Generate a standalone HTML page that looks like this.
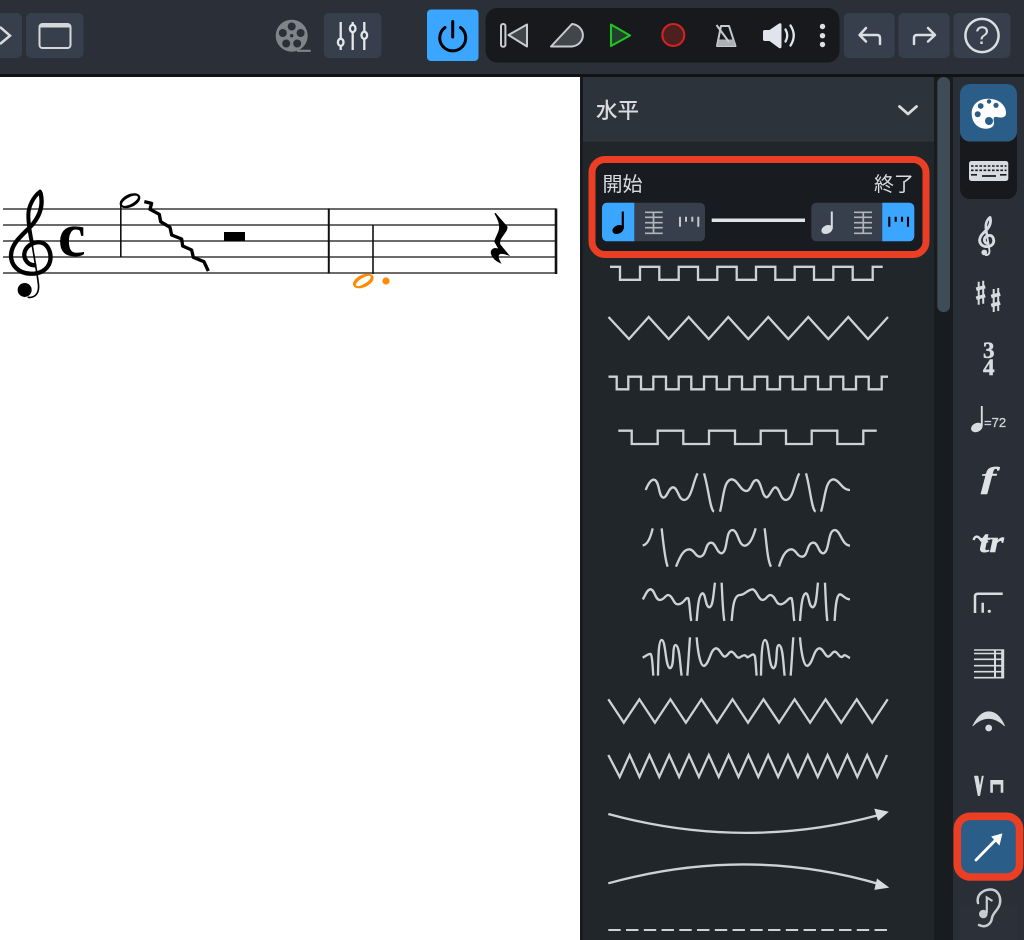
<!DOCTYPE html>
<html lang="ja"><head><meta charset="utf-8"><title>Score</title>
<style>
html,body{margin:0;padding:0;background:#fff;width:1024px;height:940px;overflow:hidden}
svg{display:block}
.cjk{font-family:"Liberation Sans","Noto Sans CJK JP",sans-serif;fill:#d8dce0}
.serif{font-family:"Liberation Serif",serif}
.l{fill:none;stroke:#ced2d5;stroke-width:2.3}
</style></head><body>
<svg width="1024" height="940" viewBox="0 0 1024 940" xmlns="http://www.w3.org/2000/svg">
<defs>
<g id="sharp" stroke="#d8dce0" fill="none">
<path stroke-width="2" d="M-2 -11V12M2.5 -12V11"/>
<path stroke-width="3.6" d="M-4.5 -3.5L4.5 -6M-4.5 5.5L4.5 3"/>
</g>
</defs>

<rect width="1024" height="940" fill="#fff"/>

<!-- score -->
<g fill="none" stroke="#3a3a3a" stroke-width="1.5">
<path d="M3 209H556M3 225H556M3 241H556M3 257H556M3 273H556"/>
</g>
<path d="M328.8 208.5V273.5" stroke="#111" stroke-width="2"/>
<path d="M556 208.5V274" stroke="#111" stroke-width="2.6"/>
<g transform="translate(0 170) scale(.3333)" fill="none" stroke="#000" stroke-linecap="round">
<path stroke-width="13" d="M103 286C80 285 68 262 75 243C82 225 105 213 125 218C148 225 155 255 150 275C143 302 115 313 90 311C55 310 32 285 33 255C35 215 75 190 100 160C120 135 130 105 122 70"/>
<path stroke-width="12" d="M120 65C100 80 85 110 85 135C85 160 90 190 95 215"/>
<path stroke-width="5" d="M95 215C102 260 110 300 115 340C120 375 100 384 85 382"/>
<circle cx="74" cy="360" r="21" fill="#000" stroke="none"/>
</g>
<text class="serif" x="58" y="256" font-size="62" font-weight="700" fill="#000">c</text>
<path d="M120.8 201V257" stroke="#111" stroke-width="1.6"/>
<ellipse cx="130" cy="200.7" rx="11" ry="6.4" transform="rotate(-25 130 200.7)" fill="#000"/>
<ellipse cx="130" cy="200.7" rx="8.8" ry="3.4" transform="rotate(-28 130 200.7)" fill="#fff"/>
<g transform="translate(0 170) scale(.3333)">
<path fill="none" stroke="#000" stroke-width="10" stroke-linejoin="round" d="M433 95L455 100L450 118L478 133L482 155L510 172L515 195L545 207L548 228L575 240L580 262L612 275L625 303"/>
</g>
<rect x="224" y="232" width="21" height="9" fill="#000"/>
<path d="M373 225V274" stroke="#111" stroke-width="1.6"/>
<ellipse cx="363.3" cy="281" rx="11" ry="6.2" transform="rotate(-25 363.3 281)" fill="#ff8c00"/>
<ellipse cx="363.3" cy="281" rx="8.6" ry="3" transform="rotate(-32 363.3 281)" fill="#fff"/>
<circle cx="386" cy="281" r="3.6" fill="#ff8c00"/>
<g transform="translate(300 170) scale(.3333)"><path fill="#000" stroke="#000" stroke-width="4" d="M585 130L620 170C625 185 590 205 600 225L624 254C600 245 585 250 600 277C575 265 565 240 585 236L598 238L585 215C590 190 615 180 585 130Z"/></g>

<!-- toolbar -->
<rect width="1024" height="74" fill="#2a2f38"/>
<rect y="74" width="1024" height="3" fill="#101214"/>
<g fill="#363f4b">
<rect x="-8" y="13" width="30" height="45" rx="5"/>
<rect x="26" y="13" width="57.5" height="45" rx="5"/>
<rect x="323.7" y="13" width="57.8" height="45" rx="5"/>
<rect x="843.7" y="13" width="51" height="45" rx="5"/>
<rect x="898.4" y="13" width="51.3" height="45" rx="5"/>
<rect x="953.5" y="13" width="57" height="45" rx="5"/>
</g>
<path d="M0 27L10 35.7L0 44" fill="none" stroke="#d8dce0" stroke-width="2.5"/>
<rect x="39.5" y="24" width="31" height="24" rx="3" fill="none" stroke="#d5d8da" stroke-width="2"/>
<path d="M39.5 27a3 3 0 0 1 3-3h25a3 3 0 0 1 3 3v.5h-31z" fill="#d5d8da"/>
<circle cx="291.7" cy="35.7" r="16" fill="#7f8488"/>
<g fill="#2a2f38"><circle cx="291.7" cy="26.5" r="4"/><circle cx="282.8" cy="33" r="4"/><circle cx="300.6" cy="33" r="4"/><circle cx="286.2" cy="43.5" r="4"/><circle cx="297.2" cy="43.5" r="4"/><circle cx="291.7" cy="35.7" r="1.7"/></g>
<path d="M297 50.8H310.7" stroke="#7f8488" stroke-width="2.2"/>
<g stroke="#e4e7ea" stroke-width="2.3" fill="#363f4b">
<path d="M340.7 22V50M352.7 22V50M364.3 22V50" fill="none"/>
<ellipse cx="340.7" cy="42.3" rx="2.8" ry="3.6"/><ellipse cx="352.7" cy="28.5" rx="2.8" ry="3.6"/><ellipse cx="364.3" cy="35.3" rx="2.8" ry="3.6"/>
</g>
<rect x="427" y="9.5" width="51.5" height="51.5" rx="4" fill="#3aa6ff"/>
<path d="M445 27.5A13 13 0 1 0 460.5 27.5M452.7 21.5V37" fill="none" stroke="#000" stroke-width="3" stroke-linecap="round"/>
<rect x="485.5" y="8" width="354" height="54.5" rx="12" fill="#17191d"/>
<g stroke="#c8ccd0" stroke-width="2" stroke-linejoin="round" fill="#41464a">
<rect x="501" y="24" width="4.4" height="22.7" rx="2" fill="#17191d"/>
<path d="M508.5 35L527 24.5V46.5Z"/>
<path d="M551 46.5L572 24A12 11.3 0 0 1 572 46.5Z"/>
<path d="M721 26H729L735.5 46H717Z" fill="#17191d"/>
<path d="M719 39.5H733.5L735.5 46H717Z" fill="#aeb2b6" stroke="none"/>
<path d="M716.5 25L729 42" fill="none"/>
</g>
<path d="M611 24.5L630 35.5L611 46Z" fill="#21402a" stroke="#22c322" stroke-width="2.1" stroke-linejoin="round"/>
<circle cx="673.3" cy="35" r="11" fill="#4d2020" stroke="#d42222" stroke-width="2.1"/>
<path d="M763 31.5Q763 30 765 30H769.5L779 23.5Q781.5 22.5 781.5 25V46.5Q781.5 49 779 48L769.5 41H765Q763 41 763 39.5Z" fill="#e0e4ec"/>
<path d="M785.5 29.5Q789 35.5 785.5 41.5M790.5 25.5Q797 35.5 790.5 45.5" fill="none" stroke="#e0e4ec" stroke-width="2.3" stroke-linecap="round"/>
<g fill="#e0e0e0"><circle cx="822.5" cy="26.5" r="2.7"/><circle cx="822.5" cy="35.7" r="2.7"/><circle cx="822.5" cy="44.5" r="2.7"/></g>
<g fill="none" stroke="#dadee2" stroke-width="2.5" stroke-linecap="round" stroke-linejoin="round">
<path d="M880 44V38Q880 35 877 35H860M866 28L859.5 35L866 41.5"/>
<path d="M914 44V38Q914 35 917 35H934.5M928 28L935 35L928 41.5"/>
<circle cx="982" cy="35.5" r="16.6"/>
</g>
<text x="982" y="44" font-family="'Liberation Sans',sans-serif" font-size="25" fill="#d8dce0" text-anchor="middle">?</text>

<!-- panel -->
<rect x="580" y="77" width="3" height="863" fill="#17191c"/>
<rect x="583" y="77" width="351" height="863" fill="#21262a"/>
<rect x="583" y="77" width="351" height="64.7" fill="#2c333b"/>
<rect x="934" y="77" width="19" height="863" fill="#191c1f"/>
<rect x="937.3" y="77" width="12.7" height="235" rx="6" fill="#3e4c58"/>
<rect x="953" y="77" width="71" height="863" fill="#2a2f37"/>
<text class="cjk" x="596" y="118" font-size="21.5" font-weight="500">水平</text>
<path d="M899.5 106.5L908 114L916.5 106.5" fill="none" stroke="#d8dce0" stroke-width="2.8" stroke-linecap="round" stroke-linejoin="round"/>

<rect x="592" y="159.5" width="334" height="95" rx="13" fill="#181b1f" stroke="#ea3f24" stroke-width="7"/>
<text class="cjk" x="602.5" y="191" font-size="20">開始</text>
<text class="cjk" x="914" y="191" font-size="20" text-anchor="end">終了</text>
<rect x="602" y="202.7" width="103" height="38.6" rx="5" fill="#363f4b"/>
<rect x="811.3" y="202.7" width="103" height="38.6" rx="5" fill="#363f4b"/>
<path d="M607 202.7H634.3V241.3H607A5 5 0 0 1 602 236.3V207.7A5 5 0 0 1 607 202.7Z" fill="#3aa6ff"/>
<path d="M882.3 202.7H909.3A5 5 0 0 1 914.3 207.7V236.3A5 5 0 0 1 909.3 241.3H882.3Z" fill="#3aa6ff"/>
<rect x="711.7" y="218.5" width="93.3" height="3.5" fill="#e0e3e6"/>
<path d="M622.8 211.5V229" stroke="#000" stroke-width="2.2"/>
<ellipse cx="618" cy="229.5" rx="5.8" ry="4.2" transform="rotate(-25 618 229.5)" fill="#000"/>
<path d="M831.8 211.5V229" stroke="#d8dce0" stroke-width="2"/>
<ellipse cx="827" cy="229.5" rx="5.8" ry="4.2" transform="rotate(-25 827 229.5)" fill="#d8dce0"/>
<g stroke="#b0b6ba" stroke-width="1.7" fill="none">
<path d="M645 212.3H662.7M645 217.3H662.7M645 222.7H662.7M645 227.7H662.7M645 233.3H662.7M653.5 212V233.5"/>
<path d="M854 212.3H872M854 217.3H872M854 222.7H872M854 227.7H872M854 233.3H872M863.3 212V233.5"/>
</g>
<path d="M680 216.7V226.7M686 216.7V221.7M692.3 216.7V221.7M698.3 216.7V226.7" stroke="#c4c8cc" stroke-width="2"/>
<path d="M889.3 216.7V226.7M895.7 216.7V221.7M902 216.7V221.7M908 216.7V226.7" stroke="#000" stroke-width="2.1"/>

<!-- line styles -->
<path class="l" d="M610 266.8H620V279.8H640V266.8H659.3V279.8H678.7V266.8H698V279.8H717.3V266.8H736.7V279.8H756V266.8H775.3V279.8H794.7V266.8H814V279.8H833.3V266.8H852.7V279.8H872.7V266.8H882.7"/>
<path class="l" d="M608.5 317L629 339L648.7 317L668.7 339L688.7 317L708.7 339L728.3 317L748.3 339L768.3 317L788.3 339L808.3 317L828.3 339L848.3 317L868 339L888 317"/>
<path class="l" d="M608.5 376.7H616.7V389.3H628.3V376.7H641V389.3H653.3V376.7H666V389.3H678.7V376.7H691.3V389.3H704V376.7H716.7V389.3H729.3V376.7H742V389.3H754.7V376.7H767.3V389.3H780V376.7H792.7V389.3H805.3V376.7H818V389.3H830.7V376.7H843.3V389.3H856V376.7H868.7V389.3H881.7V376.7H888"/>
<path class="l" d="M618.3 430.7H631.7V444H657.7V430.7H683.3V444H709V430.7H735V444H760.7V430.7H786V444H811.7V430.7H837.3V444H863.3V430.7H876.7"/>
<g transform="translate(630 460) scale(.3333)" fill="none" stroke="#ced2d5" stroke-width="7">
<path d="M47 90C55 70 65 55 75 60C90 70 85 110 100 113C112 113 115 82 130 82C145 85 145 120 163 120C185 118 190 60 203 40M222 40C235 80 240 150 252 155M270 155C280 120 280 60 305 58C325 60 330 93 350 93C365 90 365 60 380 60C395 65 395 110 410 112C420 110 425 85 435 82C450 82 450 120 468 120C490 118 495 60 508 40M528 40C540 80 545 150 557 155M573 155C585 120 585 60 610 58C630 60 635 90 660 90"/>
<path d="M38 256C50 255 60 240 68 205M95 205C100 250 105 300 113 320M138 320C150 290 160 268 178 268C195 270 195 290 210 290C230 288 225 248 243 248C258 248 260 280 275 280C295 275 285 210 308 210C325 212 325 258 345 257C360 255 370 230 377 205M404 205C410 250 412 300 423 320M447 320C455 295 465 268 485 268C500 270 500 290 517 290C535 288 530 248 550 248C565 248 565 280 580 280C600 275 592 210 615 210C632 212 635 255 660 257"/>
<path d="M38 418C45 410 50 388 62 388C75 390 75 420 90 420C105 418 105 405 115 405C130 408 130 435 145 433C165 430 165 410 175 415C180 430 180 470 184 483M200 483C203 450 205 405 217 400C228 400 225 440 238 442C250 440 250 400 255 368M275 368C277 410 278 450 283 483M305 483C308 450 310 405 330 405C345 405 350 390 368 388C380 390 385 420 398 420C412 418 410 405 422 405C437 408 437 435 453 433C470 430 475 410 485 415C490 430 490 470 493 483M510 483C513 450 515 405 527 400C538 400 535 440 548 442C560 440 560 400 564 368M585 368C587 410 588 450 592 483M614 483C616 450 618 405 630 403C640 405 645 418 660 418"/>
<path d="M38 593C45 590 55 580 62 582C68 590 68 630 70 647M84 647C85 600 85 540 95 540C108 540 105 620 120 625C135 620 125 555 137 555C150 558 150 620 155 647M172 647C175 610 177 570 180 532M200 532C203 570 210 618 222 618C240 610 240 568 258 565C270 565 275 590 285 590C297 585 295 575 305 575C315 578 318 595 328 593C340 585 345 583 352 592C362 590 370 575 375 590C378 610 378 630 380 647M393 647C394 600 395 540 405 540C418 540 415 620 430 625C445 620 435 555 447 555C460 558 460 620 464 647M482 647C485 610 487 570 490 532M510 532C513 570 520 618 532 618C550 610 550 568 568 565C580 565 585 590 595 590C607 585 605 575 615 575C625 578 628 595 638 590C645 580 650 590 660 594"/>
</g>
<path class="l" d="M608.3 699.3L623.8 722.7L639.4 699.3L654.9 722.7L670.4 699.3L685.9 722.7L701.4 699.3L717 722.7L732.5 699.3L748 722.7L763.5 699.3L779.1 722.7L794.6 699.3L810.1 722.7L825.6 699.3L841.2 722.7L856.7 699.3L872.2 722.7L887.7 699.3"/>
<path class="l" d="M608.3 755L619.7 777L629.6 755L639.5 777L649.4 755L659.3 777L669.2 755L679.1 777L689 755L698.9 777L708.8 755L718.7 777L728.6 755L738.5 777L748.4 755L758.3 777L768.2 755L778.1 777L788 755L797.9 777L807.8 755L817.7 777L827.6 755L837.5 777L847.4 755L857.3 777L867.2 755L877.1 777L887 755"/>
<path class="l" d="M608.3 814C700 839 790 839 879 815"/>
<path d="M887.7 812L875 809.3L878.3 820Z" fill="#d8dce0" stroke="#d8dce0" stroke-width="1"/>
<path class="l" d="M608.3 883.3C700 858 790 858 879 884"/>
<path d="M888 887.3L877.3 879.3L875 889.3Z" fill="#d8dce0" stroke="#d8dce0" stroke-width="1"/>
<path d="M608.3 930H888" stroke="#ced2d5" stroke-width="2.1" stroke-dasharray="12.4 5.35" fill="none"/>

<!-- sidebar -->
<rect x="960" y="84" width="57" height="115" rx="10" fill="#17191c"/>
<rect x="960" y="84" width="57" height="57.5" rx="10" fill="#2a5d87"/>
<path d="M988 98.7C1000 98.7 1006 106 1006 113C1006 118 1001 118 997 117C992 116 994 121 994 123C994 127 990 128.7 986 128.7C977 128.7 971.7 122 971.7 113.5C971.7 105 978 98.7 988 98.7Z" fill="#fff"/>
<g fill="#2a5d87"><circle cx="977.7" cy="114.3" r="3"/><circle cx="989" cy="101.5" r="2.2"/><circle cx="996" cy="105.3" r="2.6"/><circle cx="980.7" cy="106" r="2.9"/><circle cx="989" cy="121" r="4"/></g>
<rect x="969" y="161" width="39.3" height="20" rx="2.5" fill="#d8dce0"/>
<path d="M971 166H1006.5M971 170.3H1006.5" stroke="#17191c" stroke-width="1.6" stroke-dasharray="2.6 1.6"/>
<path d="M971 174.8H977M982 176H996M1000 174.8H1006.5" stroke="#17191c" stroke-width="1.7"/>

<g transform="translate(975.7 209.6) scale(.119)" fill="none" stroke="#d8dce0" stroke-linecap="round">
<path stroke-width="24" d="M103 286C80 285 68 262 75 243C82 225 105 213 125 218C148 225 155 255 150 275C143 302 115 313 90 311C55 310 32 285 33 255C35 215 75 190 100 160C120 135 130 105 122 70"/>
<path stroke-width="22" d="M120 65C100 80 85 110 85 135C85 160 90 190 95 215"/>
<path stroke-width="16" d="M95 215C102 260 110 300 115 340C120 375 100 384 85 382"/>
<circle cx="72" cy="360" r="24" fill="#d8dce0" stroke="none"/>
</g>
<use href="#sharp" x="980.7" y="292.7"/>
<use href="#sharp" x="995.7" y="300"/>
<g class="serif" font-weight="700" font-size="23" fill="#d8dce0" stroke="#d8dce0" stroke-width=".5" text-anchor="middle">
<text x="988.7" y="358">3</text><text x="988.7" y="375">4</text>
</g>
<path d="M981.8 406V426" stroke="#d8dce0" stroke-width="1.9"/>
<ellipse cx="976.8" cy="427.5" rx="6" ry="4.4" transform="rotate(-25 976.8 427.5)" fill="#d8dce0"/>
<text x="984" y="427" font-family="'Liberation Sans',sans-serif" font-size="13" fill="#d0d4d8" stroke="#d0d4d8" stroke-width=".3">=72</text>
<text class="serif" transform="translate(988.5 487.5) scale(1.5 1)" font-size="30" font-weight="700" font-style="italic" fill="#e0e3e6" stroke="#e0e3e6" stroke-width=".5" text-anchor="middle">f</text>
<text class="serif" transform="translate(979 552) scale(1.2 1)" font-size="31" font-weight="700" font-style="italic" fill="#e0e3e6" stroke="#e0e3e6" stroke-width=".4">tr</text>
<path d="M973.5 540Q975.5 534.5 979.5 538Q983 544 988 541" fill="none" stroke="#e0e3e6" stroke-width="2.4"/>
<path d="M975 613V596.5Q975 593.7 978 593.7H1002.7M982.7 602.7V612.7" fill="none" stroke="#d8dce0" stroke-width="2.5"/>
<circle cx="989.3" cy="611.3" r="1.6" fill="#d8dce0"/>
<path d="M974 650H1004M974 653.5H1004M974 659.3H1004M974 665.7H1004M974 671.7H1004M974 677.7H1004" stroke="#d8dce0" stroke-width="1.6"/>
<path d="M995 650V678" stroke="#d8dce0" stroke-width="2"/>
<rect x="1001.2" y="649.5" width="3" height="28.7" fill="#d8dce0"/>
<path d="M972.7 726C978 715 984 711.7 988.7 711.7C994 711.7 1000 715 1004.7 726C998 720 993 718.5 988.7 718.5C984 718.5 979 720 972.7 726Z" fill="#d8dce0" stroke="#d8dce0" stroke-width=".6"/>
<circle cx="988.7" cy="728" r="3.4" fill="#d8dce0"/>
<path d="M974.3 776H978L980 787L982 776H983.5L979.8 795.7H978Z" fill="#d8dce0" stroke="#d8dce0" stroke-width=".5"/>
<path d="M990.3 780H1003.3V792.7H1000.7V784.5H992.9V792.7H990.3Z" fill="#d8dce0"/>

<rect x="957.3" y="816.3" width="62.3" height="60.7" rx="13" fill="#2a5d87" stroke="#ea3f24" stroke-width="7.6"/>
<path d="M976 860L998 837.5" stroke="#fff" stroke-width="2.8" stroke-linecap="round"/>
<path d="M1002 833.8L991.7 836.7L999.3 845Z" fill="#fff" stroke="#fff" stroke-width=".6"/>

<rect x="960" y="905" width="57" height="35" fill="#2c3139"/>
<path d="M978 903C976 894 984 889.5 990.5 889.5C997.5 889.5 1001 896 1000 903C999 910 993 912 992 918C991 925 985 928 979 925" fill="none" stroke="#c8ccd0" stroke-width="2.5" stroke-linecap="round"/>
<circle cx="983.3" cy="914" r="4.3" fill="#c8ccd0"/>
<path d="M986.8 913V897.5L992.5 901" fill="none" stroke="#c8ccd0" stroke-width="2.2"/>
</svg>
</body></html>
